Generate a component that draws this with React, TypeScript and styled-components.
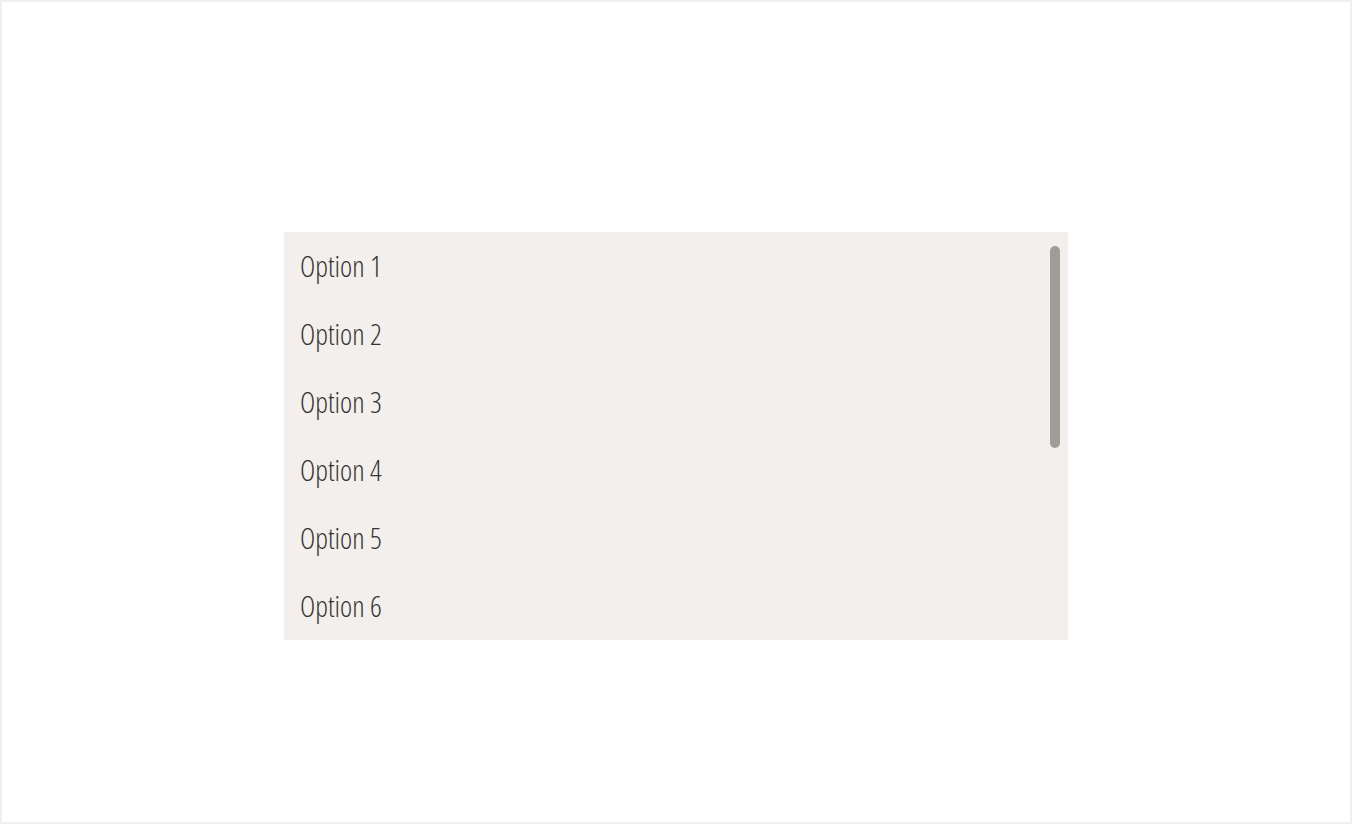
import React, { useEffect, useRef, useState } from 'react';
import styled, { createGlobalStyle } from 'styled-components';

const GlobalStyle = createGlobalStyle`
  html, body {
    margin: 0;
    padding: 0;
    background: #ffffff;
  }
  * {
    box-sizing: border-box;
  }
`;

const Page = styled.div`
  height: 100vh;
  border: 2px solid #efefef;
  display: flex;
  align-items: center;
  justify-content: center;
  padding-top: 48px;
`;

const ListBox = styled.div`
  position: relative;
  width: 784px;
  height: 408px;
  background: #f2efec;
`;

const Scroller = styled.ul`
  list-style: none;
  margin: 0;
  padding: 0 0 20px;
  height: 100%;
  overflow-y: auto;
  scrollbar-width: none;

  &::-webkit-scrollbar {
    display: none;
  }
`;

const Option = styled.li`
  height: 68px;
  display: flex;
  align-items: center;
  padding: 0 16px 2px;
  font-family: "Open Sans", "Liberation Sans", sans-serif;
  font-stretch: 75%;
  font-weight: 300;
  font-size: 29px;
  color: #363534;
  cursor: default;
`;

// custom thumb drawn over the list, sized from the scroll state
const Thumb = styled.div`
  position: absolute;
  right: 8px;
  width: 10px;
  border-radius: 5px;
  background: #a09d98;
`;

const TRACK_INSET = 14;
const options = Array.from({ length: 11 }, (_, i) => `Option ${i + 1}`);

const App = () => {
  const ref = useRef<HTMLUListElement>(null);
  const [thumb, setThumb] = useState({ top: TRACK_INSET, height: 202 });

  const update = () => {
    const el = ref.current;
    if (!el) return;
    const track = el.clientHeight - TRACK_INSET * 2;
    const height = Math.max(24, (el.clientHeight / el.scrollHeight) * track);
    const max = el.scrollHeight - el.clientHeight;
    const top = TRACK_INSET + (max > 0 ? (el.scrollTop / max) * (track - height) : 0);
    setThumb({ top, height });
  };

  useEffect(update, []);

  return (
    <>
      <GlobalStyle />
      <Page>
        <ListBox>
          <Scroller ref={ref} role="listbox" onScroll={update}>
            {options.map((o) => (
              <Option key={o} role="option">{o}</Option>
            ))}
          </Scroller>
          <Thumb style={{ top: thumb.top, height: thumb.height }} />
        </ListBox>
      </Page>
    </>
  );
};

export default App;
